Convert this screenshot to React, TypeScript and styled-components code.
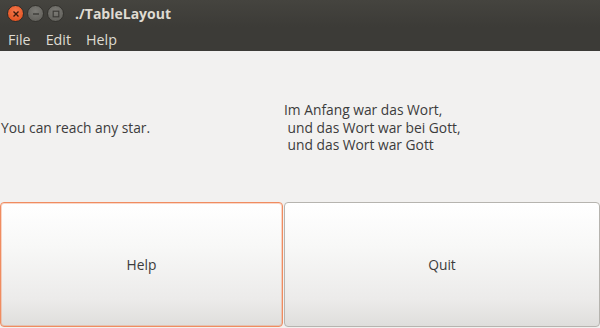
import styled, { createGlobalStyle } from "styled-components";

const GlobalStyle = createGlobalStyle`
  html, body {
    margin: 0;
    padding: 0;
    background: #f2f1f0;
  }
  body {
    font-family: "Open Sans", "Noto Sans", "DejaVu Sans", sans-serif;
  }
`;

const Window = styled.div`
  width: 600px;
  height: 328px;
  display: flex;
  flex-direction: column;
  overflow: hidden;
  background: #f2f1f0;
`;

const TitleBar = styled.div`
  height: 27px;
  display: flex;
  align-items: center;
  padding-left: 7px;
  background: linear-gradient(#45443f, #3c3b37);
`;

const WinButton = styled.div<{ $close?: boolean }>`
  width: 17px;
  height: 17px;
  border-radius: 50%;
  margin-right: 3px;
  display: flex;
  align-items: center;
  justify-content: center;
  box-sizing: border-box;
  background: ${(p) =>
    p.$close
      ? "radial-gradient(circle at 50% 35%, #f4784d, #df4a16)"
      : "radial-gradient(circle at 50% 35%, #7d7c77, #5a5954)"};
  border: 1px solid ${(p) => (p.$close ? "#2e2d2a" : "#33322e")};
`;

const Title = styled.span`
  margin-left: 8px;
  color: #dfdbd2;
  font-size: 14px;
  font-weight: 700;
`;

const MenuBar = styled.div`
  height: 24px;
  display: flex;
  align-items: center;
  gap: 15px;
  padding-left: 8px;
  background: #3c3b37;
`;

const MenuItem = styled.span`
  color: #dfdbd2;
  font-size: 14.3px;
`;

const Table = styled.div`
  flex: 1;
  display: grid;
  grid-template-columns: 283px 1fr;
  grid-template-rows: 151px 1fr;
  column-gap: 1px;
  padding-bottom: 1px;
`;

const Label = styled.div<{ $indent?: number }>`
  align-self: center;
  color: #3c3c3c;
  font-size: 13.8px;
  line-height: 17.5px;
  white-space: pre;
  padding-left: ${(p) => p.$indent ?? 0}px;
  padding-top: 2px;
`;

const Button = styled.button<{ $focused?: boolean }>`
  margin: 0;
  border-radius: 4px;
  border: 1px solid ${(p) => (p.$focused ? "#f08c60" : "#b6b4af")};
  box-shadow: ${(p) =>
    p.$focused ? "inset 0 0 0 1px rgba(240,140,96,0.35)" : "none"};
  background: linear-gradient(#ffffff 0%, #f8f8f7 35%, #ecebea 78%, #dfdedc 100%);
  color: #3c3c3c;
  font-family: "Open Sans", "Noto Sans", sans-serif;
  font-size: 13.8px;
  padding: 0;
`;

const Glyph = styled.svg`
  display: block;
`;

export default function App() {
  return (
    <>
      <GlobalStyle />
      <Window>
        <TitleBar>
          <WinButton $close>
            <Glyph width="8" height="8" viewBox="0 0 8 8">
              <path d="M1.5 1.5 L6.5 6.5 M6.5 1.5 L1.5 6.5" stroke="#3a1a0c" strokeWidth="1.4" />
            </Glyph>
          </WinButton>
          <WinButton>
            <Glyph width="8" height="8" viewBox="0 0 8 8">
              <path d="M1 4 H7" stroke="#3c3b37" strokeWidth="1.4" />
            </Glyph>
          </WinButton>
          <WinButton>
            <Glyph width="8" height="8" viewBox="0 0 8 8">
              <rect x="1.2" y="1.2" width="5.6" height="5.6" fill="none" stroke="#3c3b37" strokeWidth="1.2" />
            </Glyph>
          </WinButton>
          <Title>./TableLayout</Title>
        </TitleBar>
        <MenuBar>
          <MenuItem>File</MenuItem>
          <MenuItem>Edit</MenuItem>
          <MenuItem>Help</MenuItem>
        </MenuBar>
        <Table>
          <Label $indent={1}>You can reach any star.</Label>
          <Label>
            {"Im Anfang war das Wort,\n und das Wort war bei Gott,\n und das Wort war Gott"}
          </Label>
          <Button $focused>Help</Button>
          <Button>Quit</Button>
        </Table>
      </Window>
    </>
  );
}
